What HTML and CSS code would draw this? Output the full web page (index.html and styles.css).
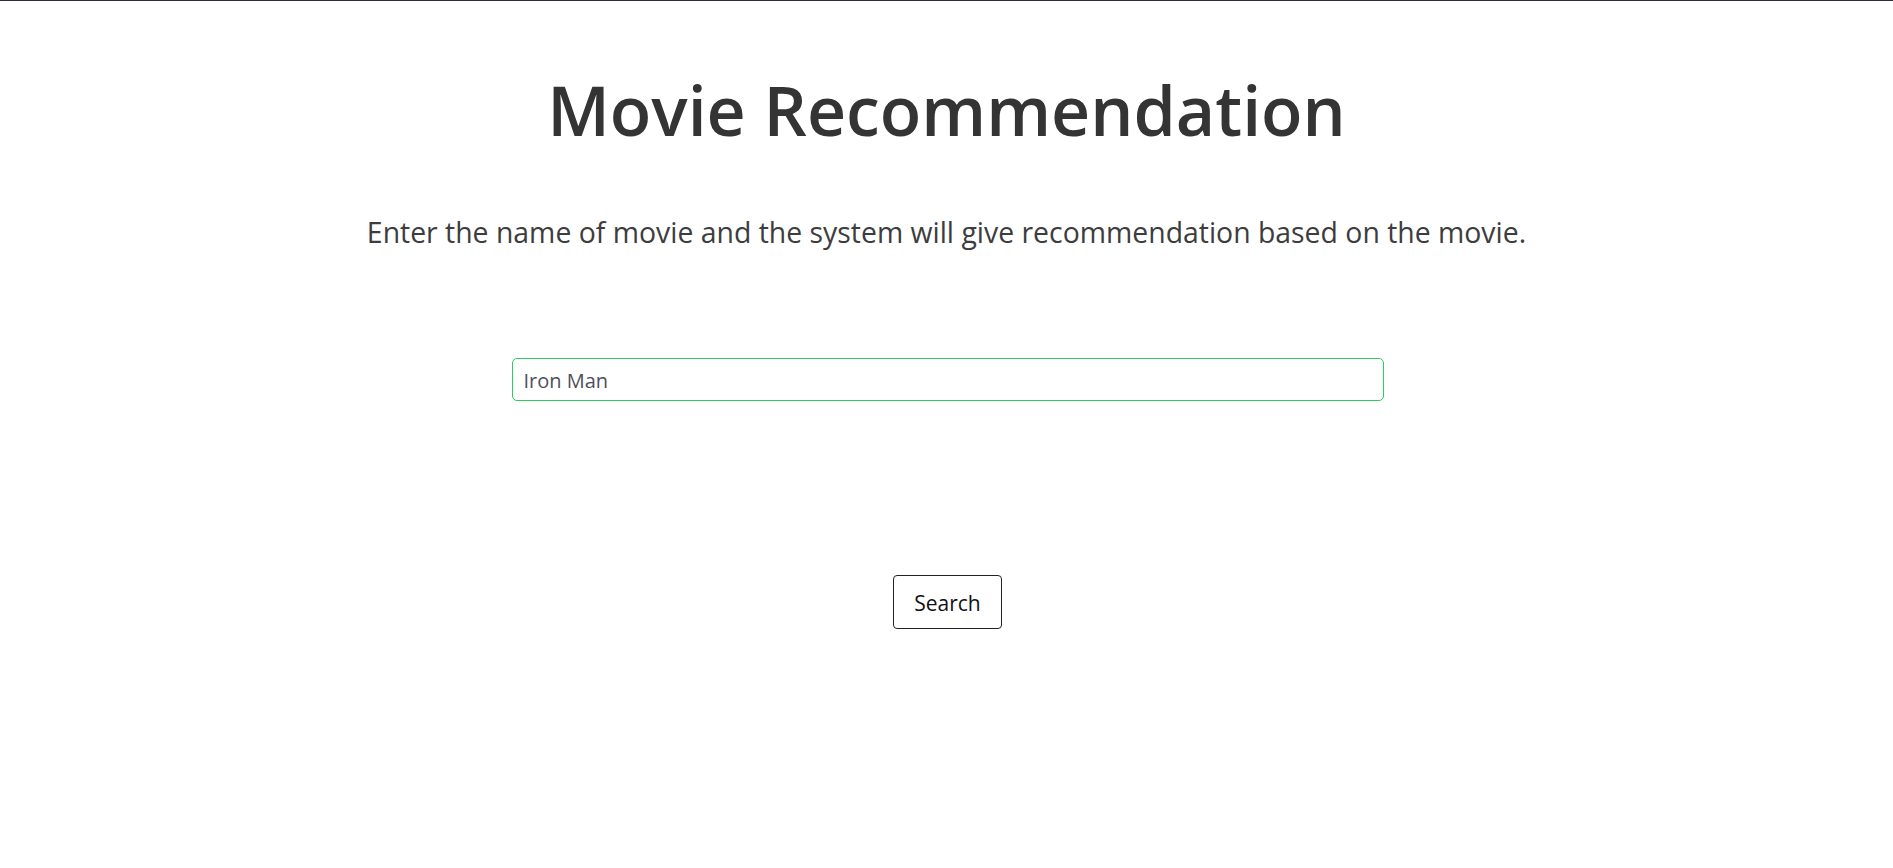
FILE: index.html
```html
<!DOCTYPE html>
<html lang="en">
<head>
<meta charset="utf-8">
<title>Movie Recommendation</title>
<link rel="stylesheet" href="styles.css">
</head>
<body>
<main class="page">
  <h1 class="title">Movie Recommendation</h1>
  <p class="lead">Enter the name of movie and the system will give recommendation based on the movie.</p>
  <form class="search-form" onsubmit="return false;">
    <input class="movie-input" type="text" value="Iron Man">
    <button class="search-btn" type="submit">Search</button>
  </form>
</main>
</body>
</html>
```
FILE: styles.css
```css
html, body {
  margin: 0;
  padding: 0;
  background: #ffffff;
}
body {
  border-top: 1px solid #2b2e39;
  font-family: "Open Sans", "Noto Sans", sans-serif;
  min-height: 867px;
}
.page {
  display: flex;
  flex-direction: column;
  align-items: center;
  text-align: center;
}
.title {
  margin: 69px 0 0;
  font-size: 68px;
  line-height: 80px;
  font-weight: 600;
  color: #343434;
  font-variant-ligatures: none;
}
.lead {
  margin: 65px 0 0;
  font-size: 28.4px;
  line-height: 34px;
  font-weight: 400;
  color: #3d3d3d;
}
.search-form {
  display: flex;
  flex-direction: column;
  align-items: center;
  margin: 0;
}
.movie-input {
  margin-top: 109px;
  margin-left: 2px;
  box-sizing: border-box;
  width: 872px;
  height: 43px;
  padding: 9px 11px 7px;
  border: 1px solid #28cf5c;
  border-radius: 5px;
  font-family: "Open Sans", "Noto Sans", sans-serif;
  font-size: 20px;
  line-height: 25px;
  color: #4f4f5a;
  outline: none;
}
.search-btn {
  margin-top: 174px;
  margin-left: 2px;
  box-sizing: border-box;
  height: 54px;
  padding: 11px 20px 9px;
  border: 1px solid #222222;
  border-radius: 4px;
  background: #ffffff;
  font-family: "Open Sans", "Noto Sans", sans-serif;
  font-size: 21px;
  line-height: 32px;
  color: #111111;
  cursor: pointer;
}
```
